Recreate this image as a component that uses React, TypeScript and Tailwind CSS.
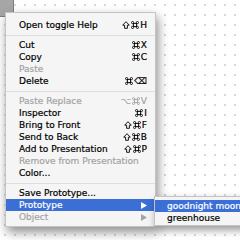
type Item =
  | { sep: true }
  | { label: string; keys?: string; pre?: string; shift?: boolean; disabled?: boolean; active?: boolean; submenu?: boolean; sep?: false }

const items: Item[] = [
  { label: "Open toggle Help", keys: "H", shift: true },
  { sep: true },
  { label: "Cut", keys: "X" },
  { label: "Copy", keys: "C" },
  { label: "Paste", disabled: true },
  { label: "Delete", keys: "⌫" },
  { sep: true },
  { label: "Paste Replace", pre: "⌥", keys: "V", disabled: true },
  { label: "Inspector", keys: "I" },
  { label: "Bring to Front", keys: "F", shift: true },
  { label: "Send to Back", keys: "B", shift: true },
  { label: "Add to Presentation", keys: "P", shift: true },
  { label: "Remove from Presentation", disabled: true },
  { label: "Color..." },
  { sep: true },
  { label: "Save Prototype..." },
  { label: "Prototype", submenu: true, active: true },
  { label: "Object", submenu: true, disabled: true },
]

function Arrow({ color }: { color: string }) {
  return (
    <svg width="6" height="7" viewBox="0 0 6 7">
      <path d="M0 0 L6 3.5 L0 7 Z" fill={color} />
    </svg>
  )
}

// outlined shift arrow
function Shift() {
  return (
    <svg width="8" height="8" viewBox="0 0 8 8" className="mr-[1px]">
      <path d="M4 0.7 L7.3 4.2 H5.4 V7.3 H2.6 V4.2 H0.7 Z" fill="none" stroke="currentColor" strokeWidth="0.9" strokeLinejoin="round" />
    </svg>
  )
}

// command key loops
function Cmd() {
  return (
    <svg width="8" height="8" viewBox="0 0 8 8" className="mr-[1px]">
      <g fill="none" stroke="currentColor" strokeWidth="0.9">
        <rect x="2.4" y="2.4" width="3.2" height="3.2" />
        <circle cx="1.6" cy="1.6" r="1.1" />
        <circle cx="6.4" cy="1.6" r="1.1" />
        <circle cx="1.6" cy="6.4" r="1.1" />
        <circle cx="6.4" cy="6.4" r="1.1" />
      </g>
    </svg>
  )
}

export default function App() {
  return (
    <div
      className="relative w-[240px] h-[240px] overflow-hidden bg-white bg-[radial-gradient(#d8d8d8_0.7px,transparent_1px)] bg-[size:10px_10px] text-[9px] leading-none [-webkit-text-stroke:0.2px]"
      style={{ fontFamily: '"DejaVu Sans", "Liberation Sans", sans-serif' }}
    >
      {/* the object that was right-clicked */}
      <div className="w-[14px] h-[17px] bg-[#a6a6a6] border-r border-b border-[#7d7d7d]" />

      {/* context menu */}
      <div className="absolute left-[5px] top-[12px] w-[151px] pt-[6px] pb-[3px] bg-[#f5f5f5] border border-[#c4c4c4] shadow-[2px_5px_10px_rgba(0,0,0,0.45)]">
        {items.map((it, i) =>
          it.sep ? (
            <div key={i} className="h-[8px] flex items-center">
              <div className="w-full h-px bg-[#dedede]" />
            </div>
          ) : (
            <div
              key={i}
              className={`relative h-[12px] flex items-center justify-between pl-[13px] pr-[8px] ${
                it.active ? "bg-[#3b6fd6] text-white" : it.disabled ? "text-[#a3a3a3]" : "text-black"
              }`}
            >
              <span>{it.label}</span>
              {it.keys && (
                <span className="flex items-center">
                  {it.shift && <Shift />}
                  {it.pre && <span className="mr-[1px]">{it.pre}</span>}
                  <Cmd />
                  {it.keys}
                </span>
              )}
              {it.submenu && <Arrow color={it.active ? "#ffffff" : "#a3a3a3"} />}
              {it.label === "Prototype" && (
                <div className="absolute left-[148px] top-[-3px] w-[110px] pt-[3px] pb-[1px] bg-[#f5f5f5] border border-[#c4c4c4] shadow-[2px_4px_8px_rgba(0,0,0,0.4)] text-black">
                  <div className="h-[12px] flex items-center pl-[12px] bg-[#3b6fd6] text-white">goodnight moon</div>
                  <div className="h-[12px] flex items-center pl-[12px]">greenhouse</div>
                </div>
              )}
            </div>
          )
        )}
      </div>
    </div>
  )
}
